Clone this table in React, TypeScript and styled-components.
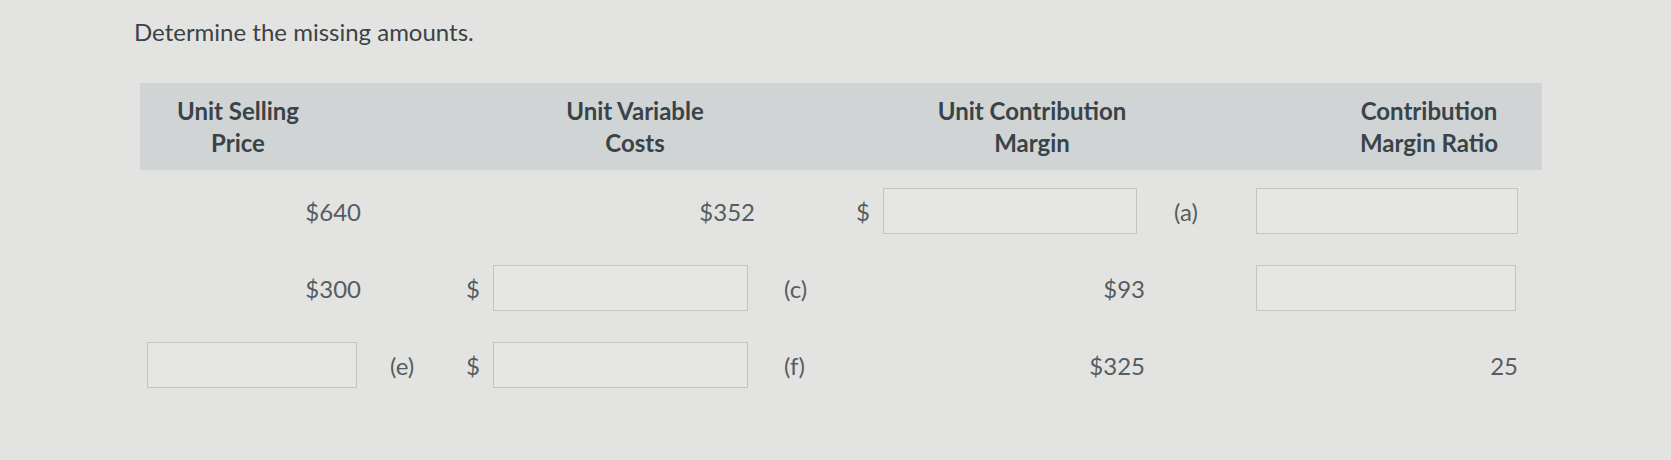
import React, { ReactElement } from 'react'
import styled, { createGlobalStyle } from 'styled-components'

const GlobalStyle = createGlobalStyle`
  body {
    margin: 0;
    background: #e3e4e1;
    font-family: Lato, "Open Sans", sans-serif;
  }
`

const Page = styled.div`
  width: 1671px;
  height: 460px;
  padding: 16px 0 0 134px;
  box-sizing: border-box;
  background: #e3e4e1;
`
const Title = styled.div`
  font-size: 24px;
  line-height: 32px;
  color: #3b4246;
`
const Table = styled.div`
  margin: 35px 0 0 6px;
  width: 1402px;
`
const HeaderBand = styled.div`
  height: 87px;
  background: #d0d4d4;
  display: grid;
  grid-template-columns: repeat(4, 196px);
  column-gap: 201px;
  align-items: center;
`
const HeaderCell = styled.div`
  display: flex;
  flex-direction: column;
  align-items: center;
  font-size: 24px;
  font-weight: 700;
  line-height: 32px;
  color: #3a4347;
  white-space: nowrap;
`
const Body = styled.div`
  display: grid;
  grid-template-columns: 214px 105px 27px 262px 101px 27px 262px 111px 262px;
  grid-auto-rows: 46px;
  row-gap: 31px;
  padding: 18px 0 0 7px;
  align-items: center;
  font-size: 24px;
  color: #555d60;
`
const Value = styled.div`
  text-align: right;
`
const Label = styled.div`
  padding-left: 29px;
`
const Dollar = styled.div``
const Input = styled.div<{ $w: number }>`
  width: ${(p) => p.$w}px;
  height: 46px;
  box-sizing: border-box;
  border: 1.5px solid #c3c5c3;
  background: #e6e7e4;
`

type Cell =
  | null
  | { t: 'v'; s: string }
  | { t: 'l'; s: string }
  | { t: 'd' }
  | { t: 'i'; w: number }

const rows: Cell[][] = [
  [{ t: 'v', s: '$640' }, null, null, { t: 'v', s: '$352' }, null, { t: 'd' }, { t: 'i', w: 254 }, { t: 'l', s: '(a)' }, { t: 'i', w: 262 }],
  [{ t: 'v', s: '$300' }, null, { t: 'd' }, { t: 'i', w: 255 }, { t: 'l', s: '(c)' }, null, { t: 'v', s: '$93' }, null, { t: 'i', w: 260 }],
  [{ t: 'i', w: 210 }, { t: 'l', s: '(e)' }, { t: 'd' }, { t: 'i', w: 255 }, { t: 'l', s: '(f)' }, null, { t: 'v', s: '$325' }, null, { t: 'v', s: '25' }],
]

function renderCell(c: Cell, key: string): ReactElement {
  if (!c) return <div key={key} />
  if (c.t === 'v') return <Value key={key}>{c.s}</Value>
  if (c.t === 'l') return <Label key={key}>{c.s}</Label>
  if (c.t === 'd') return <Dollar key={key}>$</Dollar>
  return <div key={key}><Input $w={c.w} /></div>
}

export default function App(): ReactElement {
  return (
    <Page>
      <GlobalStyle />
      <Title>Determine the missing amounts.</Title>
      <Table>
        <HeaderBand>
          <HeaderCell><span>Unit Selling</span><span>Price</span></HeaderCell>
          <HeaderCell><span>Unit Variable</span><span>Costs</span></HeaderCell>
          <HeaderCell><span>Unit Contribution</span><span>Margin</span></HeaderCell>
          <HeaderCell><span>Contribution</span><span>Margin Ratio</span></HeaderCell>
        </HeaderBand>
        <Body>
          {rows.map((r, i) => r.map((c, j) => renderCell(c, `${i}-${j}`)))}
        </Body>
      </Table>
    </Page>
  )
}
